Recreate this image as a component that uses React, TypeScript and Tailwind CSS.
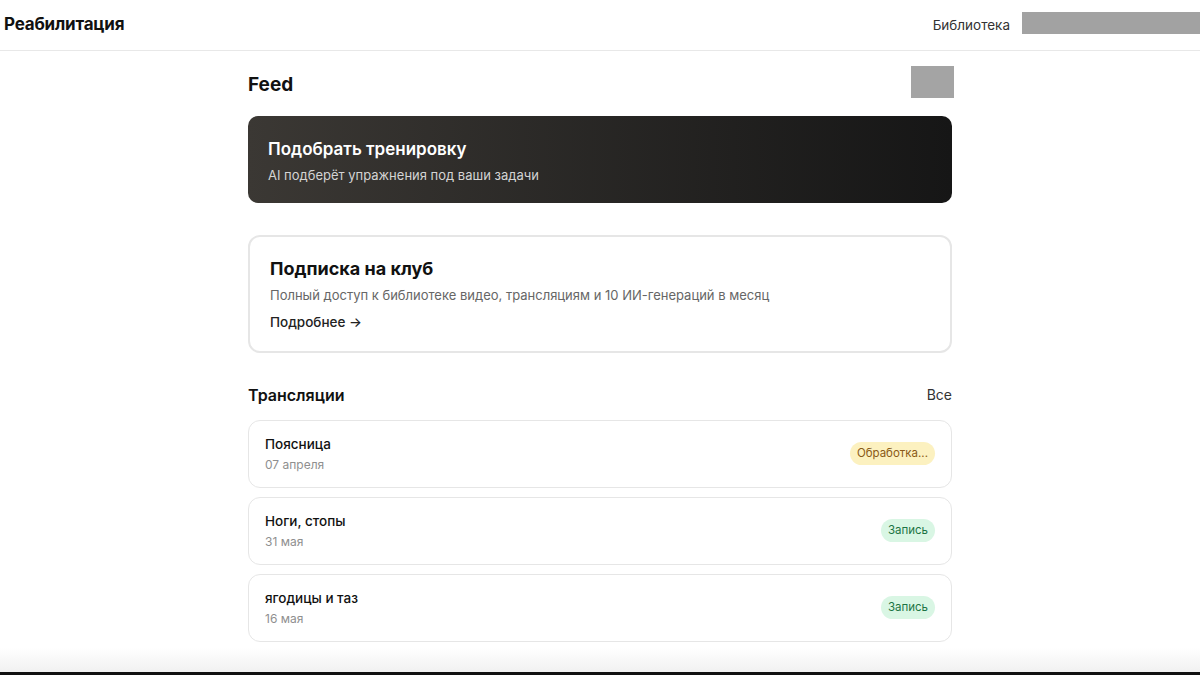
const streams = [
	{ title: "Поясница", date: "07 апреля", status: "processing" },
	{ title: "Ноги, стопы", date: "31 мая", status: "record" },
	{ title: "ягодицы и таз", date: "16 мая", status: "record" },
];

const StatusBadge = ({ status }: { status: string }) => {
	if (status === "processing") {
		return (
			<span className="rounded-full bg-[#fcf1c0] px-[7px] py-[3px] text-[11.5px] text-[#8a5a17]">
				Обработка...
			</span>
		);
	}
	return (
		<span className="rounded-full bg-[#d9f6e4] px-[7px] py-[3px] text-[11.5px] text-[#1d7444]">
			Запись
		</span>
	);
};

export default function App() {
	return (
		<div
			className="flex h-[675px] flex-col overflow-hidden bg-white text-[#111]"
			style={{ fontFamily: "Inter, 'Noto Sans', sans-serif" }}
		>
			<header className="flex h-[51px] shrink-0 items-center justify-between border-b border-[#e8e8e8] pl-1">
				<div className="text-[17px] font-bold tracking-[-0.2px]">Реабилитация</div>
				<div className="flex items-center gap-3">
					<span className="text-[13.5px] text-[#333]">Библиотека</span>
					<div className="mb-[4px] h-[22px] w-[178px] bg-[#a2a2a2]" />
				</div>
			</header>

			<main className="mx-auto flex w-[704px] flex-col">
				<div className="mt-[15px] flex items-start justify-between">
					<h1 className="pt-[5px] text-[19px] font-bold">Feed</h1>
					<div className="mr-[-2px] h-[32px] w-[43px] bg-[#a4a4a4]" />
				</div>

				<div className="mt-[16px] flex h-[87px] flex-col justify-center rounded-[10px] bg-gradient-to-r from-[#3b3834] to-[#161616] px-5 pt-[4px]">
					<div className="text-[17px] font-semibold text-white">Подобрать тренировку</div>
					<div className="mt-[3px] text-[13px] text-[#d4d4d4]">AI подберёт упражнения под ваши задачи</div>
				</div>

				<div className="mt-[32px] flex h-[118px] flex-col justify-center rounded-xl border-2 border-[#e6e6e6] px-[20px]">
					<div className="text-[18px] font-bold">Подписка на клуб</div>
					<div className="mt-[4px] text-[13px] text-[#666]">
						Полный доступ к библиотеке видео, трансляциям и 10 ИИ-генераций в месяц
					</div>
					<div className="mt-[7px] text-[13.5px] font-medium text-[#222]">Подробнее →</div>
				</div>

				<div className="mt-[30px] flex items-center justify-between">
					<h2 className="text-[16px] font-semibold">Трансляции</h2>
					<span className="text-sm text-[#333]">Все</span>
				</div>

				<div className="mt-[13px] flex flex-col gap-[9px]">
					{streams.map((s) => (
						<div
							key={s.title}
							className="flex h-[68px] items-center justify-between rounded-xl border border-[#e6e6e6] px-4"
						>
							<div className="flex flex-col">
								<span className="text-[13.5px] font-medium">{s.title}</span>
								<span className="mt-[3px] text-xs text-[#8f8f8f]">{s.date}</span>
							</div>
							<StatusBadge status={s.status} />
						</div>
					))}
				</div>
			</main>

			<div className="mt-auto h-[24px] bg-gradient-to-b from-white to-[#f1f1f1]" />
			<div className="h-[3px] bg-[#111]" />
		</div>
	);
}
